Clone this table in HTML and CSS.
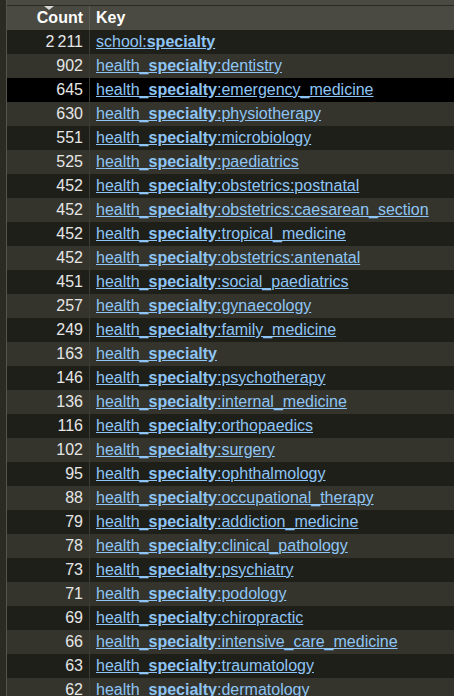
FILE: index.html
```html
<!DOCTYPE html>
<html>
<head>
<meta charset="utf-8">
<link rel="stylesheet" href="styles.css">
</head>
<body>
<div class="page">
  <div class="side"></div>
  <div class="main">
    <div class="topbar"></div>
    <table class="grid">
      <thead>
        <tr>
          <th class="count sorted">Count</th>
          <th class="key">Key</th>
        </tr>
      </thead>
      <tbody>
        <tr><td class="count">2&thinsp;211</td><td class="key"><a href="#">school:<b>specialty</b></a></td></tr>
        <tr><td class="count">902</td><td class="key"><a href="#">health_<b>specialty</b>:dentistry</a></td></tr>
        <tr class="hl"><td class="count">645</td><td class="key"><a href="#">health_<b>specialty</b>:emergency_medicine</a></td></tr>
        <tr><td class="count">630</td><td class="key"><a href="#">health_<b>specialty</b>:physiotherapy</a></td></tr>
        <tr><td class="count">551</td><td class="key"><a href="#">health_<b>specialty</b>:microbiology</a></td></tr>
        <tr><td class="count">525</td><td class="key"><a href="#">health_<b>specialty</b>:paediatrics</a></td></tr>
        <tr><td class="count">452</td><td class="key"><a href="#">health_<b>specialty</b>:obstetrics:postnatal</a></td></tr>
        <tr><td class="count">452</td><td class="key"><a href="#">health_<b>specialty</b>:obstetrics:caesarean_section</a></td></tr>
        <tr><td class="count">452</td><td class="key"><a href="#">health_<b>specialty</b>:tropical_medicine</a></td></tr>
        <tr><td class="count">452</td><td class="key"><a href="#">health_<b>specialty</b>:obstetrics:antenatal</a></td></tr>
        <tr><td class="count">451</td><td class="key"><a href="#">health_<b>specialty</b>:social_paediatrics</a></td></tr>
        <tr><td class="count">257</td><td class="key"><a href="#">health_<b>specialty</b>:gynaecology</a></td></tr>
        <tr><td class="count">249</td><td class="key"><a href="#">health_<b>specialty</b>:family_medicine</a></td></tr>
        <tr><td class="count">163</td><td class="key"><a href="#">health_<b>specialty</b></a></td></tr>
        <tr><td class="count">146</td><td class="key"><a href="#">health_<b>specialty</b>:psychotherapy</a></td></tr>
        <tr><td class="count">136</td><td class="key"><a href="#">health_<b>specialty</b>:internal_medicine</a></td></tr>
        <tr><td class="count">116</td><td class="key"><a href="#">health_<b>specialty</b>:orthopaedics</a></td></tr>
        <tr><td class="count">102</td><td class="key"><a href="#">health_<b>specialty</b>:surgery</a></td></tr>
        <tr><td class="count">95</td><td class="key"><a href="#">health_<b>specialty</b>:ophthalmology</a></td></tr>
        <tr><td class="count">88</td><td class="key"><a href="#">health_<b>specialty</b>:occupational_therapy</a></td></tr>
        <tr><td class="count">79</td><td class="key"><a href="#">health_<b>specialty</b>:addiction_medicine</a></td></tr>
        <tr><td class="count">78</td><td class="key"><a href="#">health_<b>specialty</b>:clinical_pathology</a></td></tr>
        <tr><td class="count">73</td><td class="key"><a href="#">health_<b>specialty</b>:psychiatry</a></td></tr>
        <tr><td class="count">71</td><td class="key"><a href="#">health_<b>specialty</b>:podology</a></td></tr>
        <tr><td class="count">69</td><td class="key"><a href="#">health_<b>specialty</b>:chiropractic</a></td></tr>
        <tr><td class="count">66</td><td class="key"><a href="#">health_<b>specialty</b>:intensive_care_medicine</a></td></tr>
        <tr><td class="count">63</td><td class="key"><a href="#">health_<b>specialty</b>:traumatology</a></td></tr>
        <tr><td class="count">62</td><td class="key"><a href="#">health_<b>specialty</b>:dermatology</a></td></tr>
      </tbody>
    </table>
  </div>
</div>
</body>
</html>
```

FILE: styles.css
```css
html, body {
  margin: 0;
  padding: 0;
  background: #1f1f1a;
  overflow: hidden;
}
body {
  font-family: "Liberation Sans", Arial, sans-serif;
  font-size: 16px;
  color: #e6e6e6;
}
.page {
  display: flex;
  width: 454px;
  height: 696px;
  overflow: hidden;
}
.side {
  width: 6px;
  flex: none;
  background: #2b2b24;
  border-right: 1px solid #55554d;
}
.main {
  flex: 1;
  min-width: 0;
}
.topbar {
  height: 5px;
  background: #4a4a42;
  border-bottom: 1px solid #2a2a23;
}
.grid {
  width: 100%;
  border-collapse: separate;
  border-spacing: 0;
  table-layout: fixed;
}
.grid th {
  height: 24px;
  padding: 0;
  background: #4a4a42;
  color: #ffffff;
  font-weight: bold;
  font-size: 16px;
  text-align: left;
  line-height: 24px;
}
.grid th.count,
.grid td.count {
  width: 76px;
  text-align: right;
  padding-right: 6px;
}
.grid th.count {
  border-right: 1px solid #5e5e56;
  position: relative;
}
.grid th.sorted::before {
  content: "";
  position: absolute;
  left: 37px;
  top: 0;
  border-left: 5px solid transparent;
  border-right: 5px solid transparent;
  border-top: 4px solid #d8d8d8;
}
.grid th.key {
  padding-left: 6px;
}
.grid td {
  height: 24px;
  padding: 0;
  line-height: 24px;
  white-space: nowrap;
}
.grid td.count {
  border-right: 1px solid #3b3b34;
}
.grid td.key {
  padding-left: 6px;
}
.grid tbody tr:nth-child(odd) {
  background: #1f1f1a;
}
.grid tbody tr:nth-child(even) {
  background: #34342c;
}
.grid tbody tr.hl {
  background: #000000;
}
.grid a {
  color: #8ec5f5;
  text-decoration: underline;
}
.grid a b {
  font-weight: bold;
}
```
